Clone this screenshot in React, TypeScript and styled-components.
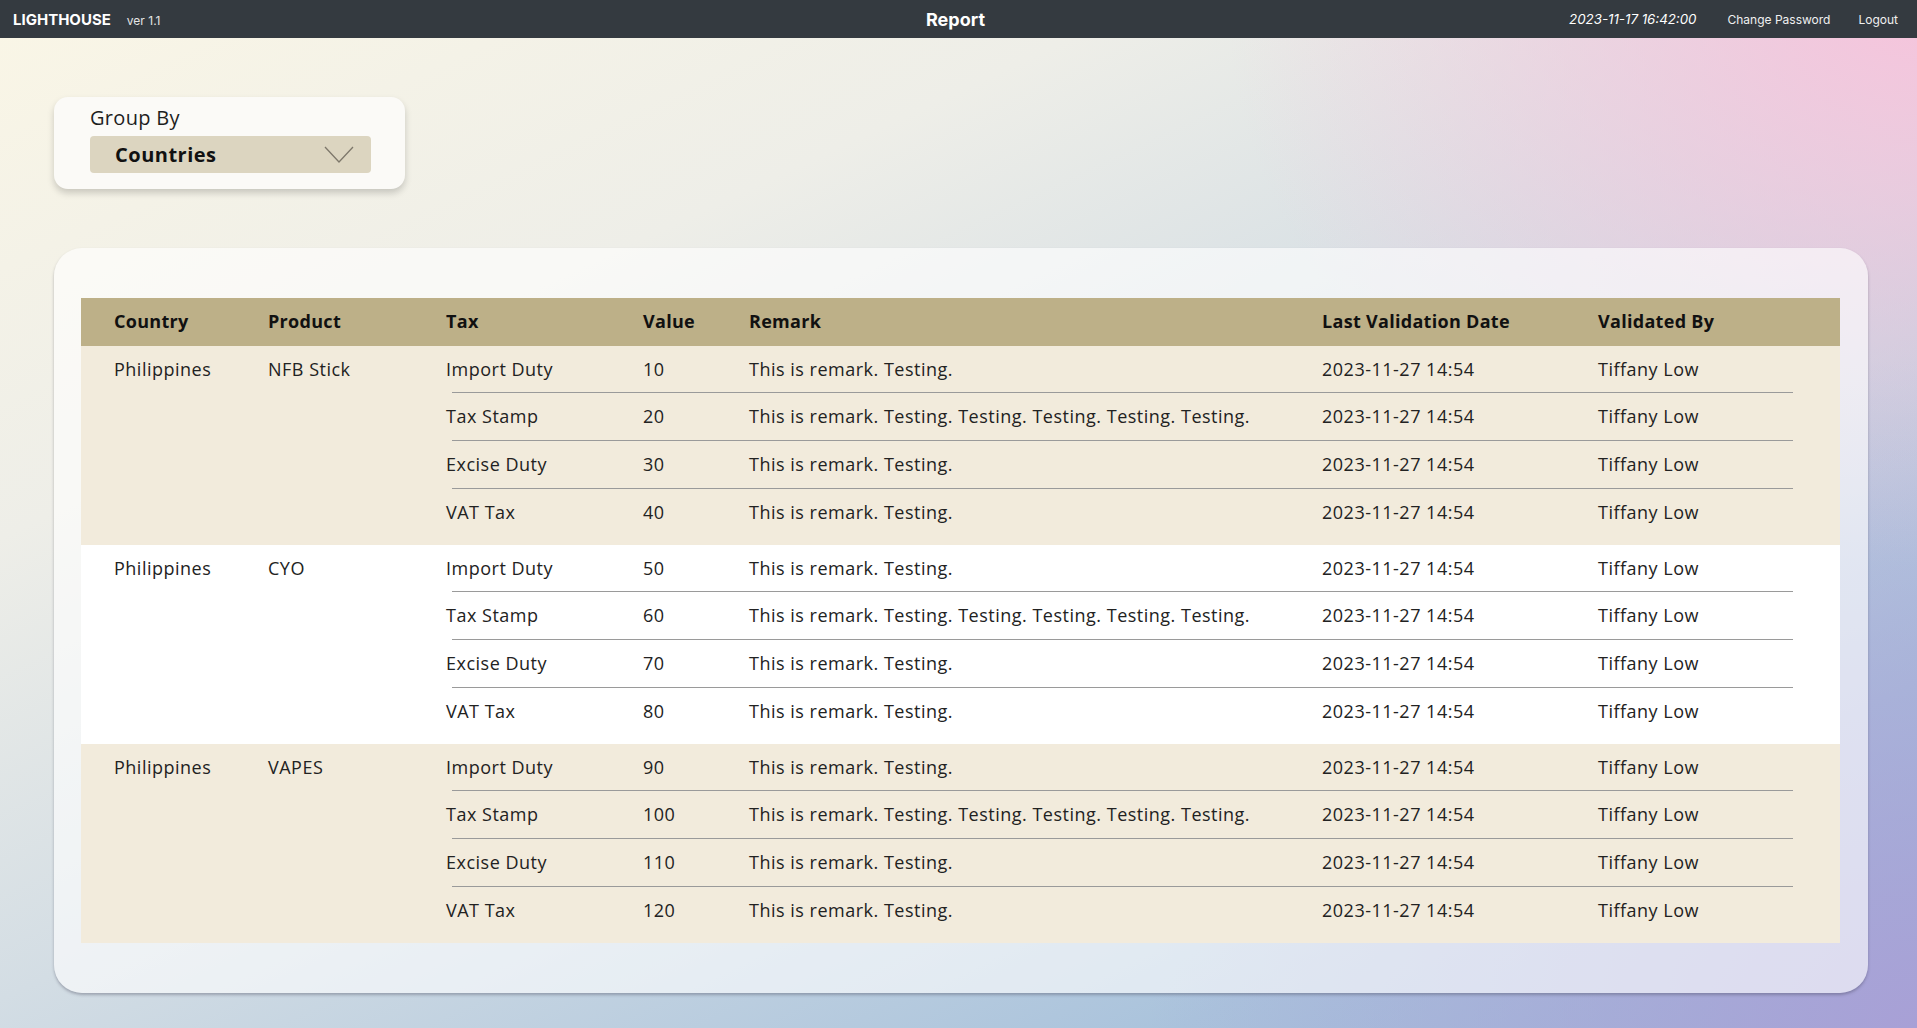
import * as React from 'react';
import styled, { createGlobalStyle } from 'styled-components';

interface TaxRow {
  tax: string;
  value: number;
  remark: string;
}

interface Group {
  country: string;
  product: string;
  rows: TaxRow[];
}

const SHORT = 'This is remark. Testing.';
const LONG = 'This is remark. Testing. Testing. Testing. Testing. Testing.';
const DATE = '2023-11-27 14:54';
const USER = 'Tiffany Low';

function makeRows(start: number): TaxRow[] {
  return [
    { tax: 'Import Duty', value: start, remark: SHORT },
    { tax: 'Tax Stamp', value: start + 10, remark: LONG },
    { tax: 'Excise Duty', value: start + 20, remark: SHORT },
    { tax: 'VAT Tax', value: start + 30, remark: SHORT },
  ];
}

const groups: Group[] = [
  { country: 'Philippines', product: 'NFB Stick', rows: makeRows(10) },
  { country: 'Philippines', product: 'CYO', rows: makeRows(50) },
  { country: 'Philippines', product: 'VAPES', rows: makeRows(90) },
];

function App() {
  return (
    <>
      <GlobalStyle />
      <Page>
        <NavBar>
          <Brand>
            <Logo>LIGHTHOUSE</Logo>
            <Version>ver 1.1</Version>
          </Brand>
          <NavTitle>Report</NavTitle>
          <NavRight>
            <Clock>2023-11-17 16:42:00</Clock>
            <NavLink>Change Password</NavLink>
            <NavLink>Logout</NavLink>
          </NavRight>
        </NavBar>
        <Main>
          <FilterCard>
            <FilterLabel>Group By</FilterLabel>
            <Select>
              <span>Countries</span>
              <svg width="30" height="18" viewBox="0 0 30 18">
                <polyline points="1,1 15,16 29,1" fill="none" stroke="#7d776a" strokeWidth="1.3" />
              </svg>
            </Select>
          </FilterCard>
          <Panel>
            <Table>
              <HeadRow>
                <HeadCell>Country</HeadCell>
                <HeadCell>Product</HeadCell>
                <HeadCell>Tax</HeadCell>
                <HeadCell>Value</HeadCell>
                <HeadCell>Remark</HeadCell>
                <HeadCell>Last Validation Date</HeadCell>
                <HeadCell>Validated By</HeadCell>
              </HeadRow>
              {groups.map((g, gi) => (
                <GroupRow key={gi} $shaded={gi % 2 === 0}>
                  <GroupCell>{g.country}</GroupCell>
                  <GroupCell>{g.product}</GroupCell>
                  <SubTable>
                    {g.rows.map((r, ri) => (
                      <SubRow key={ri} $divider={ri > 0}>
                        <Cell>{r.tax}</Cell>
                        <Cell>{r.value}</Cell>
                        <Cell>{r.remark}</Cell>
                        <Cell>{DATE}</Cell>
                        <Cell>{USER}</Cell>
                      </SubRow>
                    ))}
                  </SubTable>
                </GroupRow>
              ))}
            </Table>
          </Panel>
        </Main>
      </Page>
    </>
  );
}

const GlobalStyle = createGlobalStyle`
  html, body {
    margin: 0;
    padding: 0;
  }
  body {
    font-family: "Open Sans", "Noto Sans", sans-serif;
    color: #222;
  }
`;

const Page = styled.div`
  min-height: 100vh;
  display: flex;
  flex-direction: column;
  background:
    radial-gradient(ellipse 36% 55% at 100% 0%, rgba(246, 196, 220, 1) 0%, rgba(246, 196, 220, 0) 100%),
    radial-gradient(ellipse 40% 65% at 100% 100%, rgba(168, 160, 214, 1) 0%, rgba(168, 160, 214, 0) 100%),
    linear-gradient(155deg, #faf6e6 0%, #eeeee8 28%, #d3dde4 52%, #aac3dc 82%, #9cbad9 100%);
`;

const NavBar = styled.div`
  height: 38px;
  background: #343a40;
  color: #fff;
  display: grid;
  grid-template-columns: 1fr auto 1fr;
  align-items: center;
  padding: 0 19px 0 13px;
  font-family: Inter, "Liberation Sans", sans-serif;
`;

const Brand = styled.div`
  display: flex;
  align-items: baseline;
  gap: 16px;
`;

const Logo = styled.span`
  font-weight: 700;
  font-size: 15px;
`;

const Version = styled.span`
  font-size: 12px;
  color: #e6e6e6;
`;

const NavTitle = styled.div`
  font-weight: 700;
  font-size: 18px;
`;

const NavRight = styled.div`
  display: flex;
  justify-content: flex-end;
  align-items: center;
  font-size: 12px;
`;

const Clock = styled.span`
  font-style: italic;
  font-size: 13.3px;
  margin-right: 31px;
`;

const NavLink = styled.span`
  color: #f0f0f0;
  & + & {
    margin-left: 28px;
  }
`;

const Main = styled.div`
  flex: 1;
  padding: 59px 49px 35px 54px;
  display: flex;
  flex-direction: column;
  gap: 59px;
  font-family: "Open Sans", "Noto Sans", sans-serif;
`;

const FilterCard = styled.div`
  width: 351px;
  box-sizing: border-box;
  padding: 8px 34px 16px 36px;
  background: #fbfaf7;
  border-radius: 14px;
  box-shadow: 0 4px 7px rgba(0, 0, 0, 0.18);
`;

const FilterLabel = styled.div`
  font-size: 20px;
  line-height: 26px;
  margin-bottom: 5px;
  letter-spacing: 0.3px;
  color: #1e1e1e;
`;

const Select = styled.div`
  height: 37px;
  background: #dcd5c0;
  border-radius: 4px;
  display: flex;
  align-items: center;
  justify-content: space-between;
  padding: 0 17px 0 25px;
  font-size: 20px;
  font-weight: 700;
  letter-spacing: 0.5px;
  color: #111;
`;

const Panel = styled.div`
  border-radius: 28px;
  background: rgba(255, 255, 255, 0.62);
  box-shadow: 0 2px 3px rgba(60, 60, 80, 0.35);
  padding: 50px 28px 50px 27px;
`;

const Table = styled.div`
  display: flex;
  flex-direction: column;
  font-size: 18px;
  letter-spacing: 0.5px;
`;

const COLUMNS = '154px 178px 197px 106px 573px 276px 1fr';

const HeadRow = styled.div`
  display: grid;
  grid-template-columns: ${COLUMNS};
  align-items: center;
  height: 48px;
  box-sizing: border-box;
  padding: 0 47px 3px 33px;
  background: #bdb088;
`;

const HeadCell = styled.div`
  font-weight: 700;
  letter-spacing: 0.3px;
  color: #111;
`;

const GroupRow = styled.div<{ $shaded: boolean }>`
  display: grid;
  grid-template-columns: 154px 178px 1fr;
  padding: 0 47px 9px 33px;
  background: ${(p) => (p.$shaded ? '#f2ebdc' : '#ffffff')};
`;

const GroupCell = styled.div`
  height: 45px;
  display: flex;
  align-items: center;
  color: #222;
`;

const SubTable = styled.div`
  display: flex;
  flex-direction: column;
`;

const SubRow = styled.div<{ $divider: boolean }>`
  display: grid;
  grid-template-columns: 197px 106px 573px 276px 1fr;
  align-items: center;
  height: ${(p) => (p.$divider ? '48px' : '46px')};
  position: relative;
  &::before {
    content: '';
    display: ${(p) => (p.$divider ? 'block' : 'none')};
    position: absolute;
    top: 0;
    left: 6px;
    right: 0;
    border-top: 1.5px solid #9a9a9a;
  }
`;

const Cell = styled.div`
  color: #222;
  white-space: nowrap;
`;

export default App;
